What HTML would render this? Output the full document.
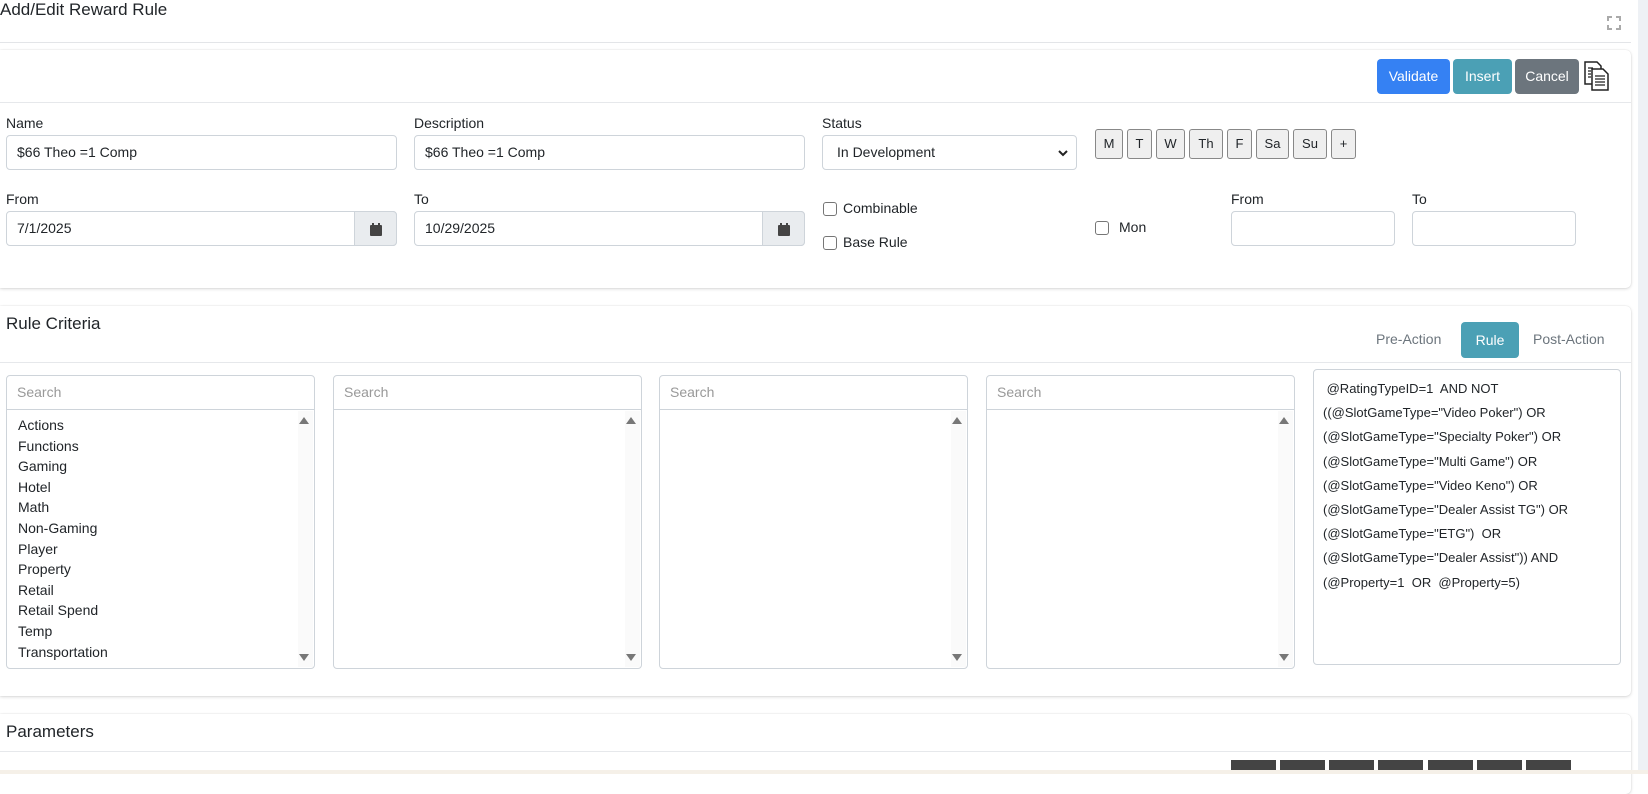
<!DOCTYPE html>
<html><head><meta charset="utf-8"><style>
*{box-sizing:border-box;margin:0;padding:0}
body{width:1648px;height:774px;overflow:hidden;background:#fff;font-family:"Liberation Sans",sans-serif;color:#212529;position:relative;font-size:14px}
.a{position:absolute}
.panel{position:absolute;left:0;width:1631px;background:#fff;border-radius:0 5px 5px 0;box-shadow:0 0 1px rgba(0,0,0,.15),0 1px 3px rgba(0,0,0,.15)}
.hl{position:absolute;left:0;width:1631px;height:1px;background:#e6e8eb}
.inp{position:absolute;border:1px solid #ced4da;border-radius:4px;background:#fff;height:35px;padding-left:10px;line-height:33px;font-size:14px}
.lbl{position:absolute;font-size:14px}
.btn{position:absolute;top:59px;height:35px;border-radius:4px;color:#fff;font-size:14px;line-height:35px;text-align:center}
.day{position:absolute;top:129px;height:30px;border:1px solid #888;border-radius:3px;background:#efefef;font-size:13px;text-align:center;line-height:28px}
.cb{position:absolute;width:14px;height:14px;border:1px solid #767676;border-radius:3px;background:#fff}
.srch{position:absolute;top:375px;height:35px;border:1px solid #ced4da;border-radius:4px 4px 0 0;color:#999;padding-left:10px;line-height:33px;font-size:14px}
.lst{position:absolute;top:409px;height:260px;border:1px solid #ced4da;border-radius:0 0 4px 4px;background:#fff}
.sb{position:absolute;right:1px;top:1px;bottom:1px;width:15px;background:#fafafa}
.up,.dn{position:absolute;right:4px;width:0;height:0;border-left:5px solid transparent;border-right:5px solid transparent}
.up{top:6px;border-bottom:7px solid #777}.dn{bottom:6px;border-top:7px solid #777}
.items div{height:20.6px;line-height:20.6px;font-size:14px}
.ta{position:absolute;left:1313px;top:369px;width:308px;height:296px;border:1px solid #ced4da;border-radius:4px;padding:7px 0 0 9px;font-size:13px;line-height:24.2px;white-space:pre}
.dk{position:absolute;top:760px;width:45px;height:14px;background:#444}
</style></head><body>
<div class="a" style="left:0;top:0;font-size:17px">Add/Edit Reward Rule</div>
<svg class="a" style="left:1607px;top:16px" width="14" height="14" viewBox="0 0 14 14" fill="none" stroke="#aaa" stroke-width="2"><path d="M1 5V1h4M9 1h4v4M13 9v4H9M5 13H1V9"/></svg>
<div class="a" style="left:0;top:42px;width:1631px;height:1px;background:#e3e5e8"></div>
<div class="a" style="right:0;top:0;width:10px;height:774px;background:#eef1f5"></div>

<div class="panel" style="top:50px;height:238px"></div>
<div class="hl" style="top:102px"></div>
<div class="btn" style="left:1377px;width:73px;background:#3581f3">Validate</div>
<div class="btn" style="left:1453px;width:59px;background:#4ba0b5">Insert</div>
<div class="btn" style="left:1515px;width:64px;background:#6c757d">Cancel</div>
<svg class="a" style="left:1583px;top:60px" width="28" height="32" viewBox="0 0 28 32" fill="#fff" stroke="#222" stroke-width="1.5"><path d="M2 2h12l4 4v18H2z"/><path d="M9 9h11l5 5v16H9z"/><path d="M12 16h10M12 19h10M12 22h10M12 25h10M5 8h5M5 11h3M5 14h3M5 17h3" fill="none" stroke-width="1.2"/></svg>

<div class="lbl" style="left:6px;top:115px">Name</div>
<div class="inp" style="left:6px;top:135px;width:391px">$66 Theo =1 Comp</div>
<div class="lbl" style="left:414px;top:115px">Description</div>
<div class="inp" style="left:414px;top:135px;width:391px">$66 Theo =1 Comp</div>
<div class="lbl" style="left:822px;top:115px">Status</div>
<div class="inp" style="left:822px;top:135px;width:255px;padding-left:14px">In Development<svg style="position:absolute;right:8px;top:13px" width="10" height="8" viewBox="0 0 10 8"><path d="M1 2l4 4 4-4" stroke="#222" stroke-width="2" fill="none"/></svg></div>
<div class="day" style="left:1095px;width:28px">M</div>
<div class="day" style="left:1127px;width:25px">T</div>
<div class="day" style="left:1156px;width:29px">W</div>
<div class="day" style="left:1189px;width:34px">Th</div>
<div class="day" style="left:1227px;width:25px">F</div>
<div class="day" style="left:1256px;width:33px">Sa</div>
<div class="day" style="left:1293px;width:34px">Su</div>
<div class="day" style="left:1331px;width:25px">+</div>

<div class="lbl" style="left:6px;top:191px">From</div>
<div class="inp" style="left:6px;top:211px;width:391px">7/1/2025</div>
<div class="a" style="left:354px;top:211px;width:43px;height:35px;background:#e9ecef;border:1px solid #ced4da;border-radius:0 4px 4px 0"><svg style="position:absolute;left:15px;top:11px" width="12" height="13" viewBox="0 0 12 13" fill="#444"><rect x="0" y="2" width="12" height="11" rx="1"/><rect x="2" y="0" width="2" height="3"/><rect x="8" y="0" width="2" height="3"/></svg></div>
<div class="lbl" style="left:414px;top:191px">To</div>
<div class="inp" style="left:414px;top:211px;width:391px">10/29/2025</div>
<div class="a" style="left:762px;top:211px;width:43px;height:35px;background:#e9ecef;border:1px solid #ced4da;border-radius:0 4px 4px 0"><svg style="position:absolute;left:15px;top:11px" width="12" height="13" viewBox="0 0 12 13" fill="#444"><rect x="0" y="2" width="12" height="11" rx="1"/><rect x="2" y="0" width="2" height="3"/><rect x="8" y="0" width="2" height="3"/></svg></div>
<div class="cb" style="left:823px;top:202px"></div><div class="lbl" style="left:843px;top:200px">Combinable</div>
<div class="cb" style="left:823px;top:236px"></div><div class="lbl" style="left:843px;top:234px">Base Rule</div>
<div class="cb" style="left:1095px;top:221px"></div><div class="lbl" style="left:1119px;top:219px">Mon</div>
<div class="lbl" style="left:1231px;top:191px">From</div>
<div class="inp" style="left:1231px;top:211px;width:164px"></div>
<div class="lbl" style="left:1412px;top:191px">To</div>
<div class="inp" style="left:1412px;top:211px;width:164px"></div>

<div class="panel" style="top:306px;height:390px"></div>
<div class="hl" style="top:362px"></div>
<div class="a" style="left:6px;top:314px;font-size:17px">Rule Criteria</div>
<div class="a" style="left:1376px;top:331px;color:#6c757d;font-size:14px">Pre-Action</div>
<div class="a" style="left:1461px;top:322px;width:58px;height:36px;background:#4ba0b5;border-radius:4px;color:#fff;text-align:center;line-height:36px;font-size:14px">Rule</div>
<div class="a" style="left:1533px;top:331px;color:#6c757d;font-size:14px">Post-Action</div>

<div class="srch" style="left:6px;width:309px">Search</div>
<div class="lst" style="left:6px;width:309px"><div class="sb"><div class="up"></div><div class="dn"></div></div>
<div class="items" style="position:absolute;left:11px;top:5px"><div>Actions</div><div>Functions</div><div>Gaming</div><div>Hotel</div><div>Math</div><div>Non-Gaming</div><div>Player</div><div>Property</div><div>Retail</div><div>Retail Spend</div><div>Temp</div><div>Transportation</div></div></div>
<div class="srch" style="left:333px;width:309px">Search</div>
<div class="lst" style="left:333px;width:309px"><div class="sb"><div class="up"></div><div class="dn"></div></div></div>
<div class="srch" style="left:659px;width:309px">Search</div>
<div class="lst" style="left:659px;width:309px"><div class="sb"><div class="up"></div><div class="dn"></div></div></div>
<div class="srch" style="left:986px;width:309px">Search</div>
<div class="lst" style="left:986px;width:309px"><div class="sb"><div class="up"></div><div class="dn"></div></div></div>
<div class="ta"> @RatingTypeID=1  AND NOT
((@SlotGameType="Video Poker") OR
(@SlotGameType="Specialty Poker") OR
(@SlotGameType="Multi Game") OR
(@SlotGameType="Video Keno") OR
(@SlotGameType="Dealer Assist TG") OR
(@SlotGameType="ETG")  OR
(@SlotGameType="Dealer Assist")) AND
(@Property=1  OR  @Property=5)</div>

<div class="panel" style="top:714px;height:80px"></div>
<div class="hl" style="top:751px"></div>
<div class="a" style="left:6px;top:722px;font-size:17px">Parameters</div>
<div class="dk" style="left:1231px"></div><div class="dk" style="left:1280px"></div><div class="dk" style="left:1329px"></div><div class="dk" style="left:1378px"></div><div class="dk" style="left:1428px"></div><div class="dk" style="left:1477px"></div><div class="dk" style="left:1526px"></div>
<div class="a" style="left:0;top:770px;width:1648px;height:4px;background:#f5f0e8"></div>
</body></html>
